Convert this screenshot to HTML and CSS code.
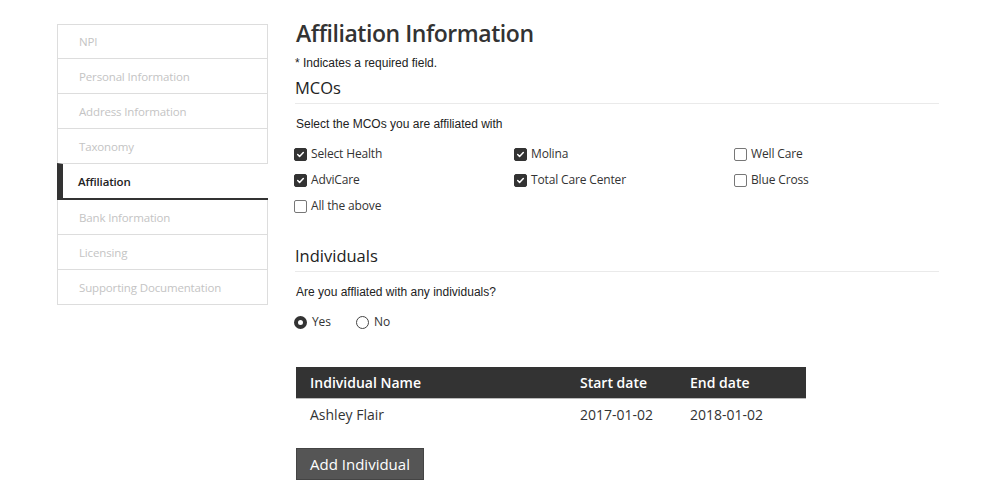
FILE: index.html
```html
<!DOCTYPE html>
<html>
<head>
<meta charset="utf-8">
<link rel="stylesheet" href="styles.css">
</head>
<body>
<div class="page">
  <nav class="steps">
    <div class="step">NPI</div>
    <div class="step">Personal Information</div>
    <div class="step">Address Information</div>
    <div class="step">Taxonomy</div>
    <div class="step active">Affiliation</div>
    <div class="step">Bank Information</div>
    <div class="step">Licensing</div>
    <div class="step">Supporting Documentation</div>
  </nav>
  <main class="content">
    <h1 class="title">Affiliation Information</h1>
    <p class="note">* Indicates a required field.</p>
    <h2 class="section">MCOs</h2>
    <p class="question">Select the MCOs you are affiliated with</p>
    <div class="checks">
      <label class="check"><span class="box on"><svg viewBox="0 0 13 13" width="13" height="13"><path d="M3.2 6.6 5.4 8.8 9.8 4.2" fill="none" stroke="#fff" stroke-width="1.8" stroke-linecap="round" stroke-linejoin="round"/></svg></span>Select Health</label>
      <label class="check"><span class="box on"><svg viewBox="0 0 13 13" width="13" height="13"><path d="M3.2 6.6 5.4 8.8 9.8 4.2" fill="none" stroke="#fff" stroke-width="1.8" stroke-linecap="round" stroke-linejoin="round"/></svg></span>Molina</label>
      <label class="check"><span class="box"></span>Well Care</label>
      <label class="check"><span class="box on"><svg viewBox="0 0 13 13" width="13" height="13"><path d="M3.2 6.6 5.4 8.8 9.8 4.2" fill="none" stroke="#fff" stroke-width="1.8" stroke-linecap="round" stroke-linejoin="round"/></svg></span>AdviCare</label>
      <label class="check"><span class="box on"><svg viewBox="0 0 13 13" width="13" height="13"><path d="M3.2 6.6 5.4 8.8 9.8 4.2" fill="none" stroke="#fff" stroke-width="1.8" stroke-linecap="round" stroke-linejoin="round"/></svg></span>Total Care Center</label>
      <label class="check"><span class="box"></span>Blue Cross</label>
      <label class="check"><span class="box"></span>All the above</label>
    </div>
    <h2 class="section second">Individuals</h2>
    <p class="question">Are you affliated with any individuals?</p>
    <div class="radios">
      <label class="radio"><span class="dot on"></span>Yes</label>
      <label class="radio"><span class="dot"></span>No</label>
    </div>
    <table class="grid">
      <thead>
        <tr><th class="c-name">Individual Name</th><th class="c-start">Start date</th><th class="c-end">End date</th></tr>
      </thead>
      <tbody>
        <tr><td>Ashley Flair</td><td>2017-01-02</td><td>2018-01-02</td></tr>
      </tbody>
    </table>
    <button class="add">Add Individual</button>
  </main>
</div>
</body>
</html>
```
FILE: styles.css
```css
* { box-sizing: border-box; }
html, body { margin: 0; padding: 0; background: #fff; }
body { font-family: "Open Sans", "Noto Sans", sans-serif; color: #333; }

.page {
  display: flex;
  align-items: flex-start;
  padding: 17px 0 0 57px;
  gap: 27px;
}

.steps {
  width: 211px;
  margin-top: 7px;
  display: flex;
  flex-direction: column;
}
.step {
  height: 35px;
  display: flex;
  align-items: center;
  padding-left: 21px;
  font-size: 11.5px;
  color: #c4c4c4;
  border: 1px solid #ddd;
  border-top: none;
  letter-spacing: -0.15px;
}
.step:first-child { border-top: 1px solid #ddd; }
.step.active {
  color: #222;
  font-weight: 600;
  border-left: 6px solid #333;
  border-right: none;
  border-bottom: 2px solid #333;
  border-top: 1px solid #ddd;
  padding-left: 15px;
  margin-top: -1px;
  height: 37px;
}

.content {
  width: 644px;
  display: flex;
  flex-direction: column;
  align-items: flex-start;
}

.title {
  margin: 0 0 0 1px;
  font-size: 23px;
  font-weight: 600;
  color: #333;
  line-height: 32px;
  letter-spacing: -0.45px;
}
.note {
  margin: 7px 0 0;
  font-family: "Liberation Sans", Arial, sans-serif;
  font-size: 12px;
  color: #222;
  line-height: 14px;
}
.section {
  align-self: stretch;
  margin: 7px 0 0;
  padding-bottom: 4px;
  font-size: 16.5px;
  font-weight: 400;
  color: #222;
  line-height: 22px;
  border-bottom: 1px solid #eaeaea;
}
.section.second { margin-top: 31px; }
.question {
  margin: 13px 0 0 1px;
  font-family: "Liberation Sans", Arial, sans-serif;
  font-size: 12px;
  color: #222;
  line-height: 14px;
}

.checks {
  margin-top: 15px;
  display: grid;
  grid-template-columns: 220px 220px 200px;
  row-gap: 10px;
  margin-left: -1px;
}
.check, .radio {
  display: flex;
  align-items: center;
  font-size: 12px;
  color: #333;
  line-height: 16px;
  letter-spacing: -0.15px;
}
.box {
  width: 13px;
  height: 13px;
  border: 1px solid #777;
  border-radius: 2px;
  margin-right: 4px;
  display: flex;
  align-items: center;
  justify-content: center;
}
.box.on { background: #333; border-color: #333; }
.box svg { display: block; }

.radios {
  margin-top: 15px;
  display: flex;
  gap: 16px;
  margin-left: -1px;
}
.dot {
  width: 13px;
  height: 13px;
  border: 1px solid #444;
  border-radius: 50%;
  margin-right: 5px;
}
.dot.on {
  border: 4px solid #333;
  background: #fff;
}
.radio:first-child { width: 46px; }

.grid {
  margin-top: 37px;
  margin-left: 1px;
  width: 510px;
  border-collapse: collapse;
  font-size: 14px;
}
.grid th {
  background: #333;
  color: #fff;
  font-weight: 600;
  text-align: left;
  height: 31px;
  padding: 0 0 0 14px;
  border-bottom: 1px solid #bbb;
}
.grid td {
  height: 32px;
  padding: 0 0 0 14px;
  color: #333;
}
.grid .c-name { width: 270px; }
.grid .c-start { width: 110px; }

.add {
  margin-top: 18px;
  margin-left: 1px;
  width: 128px;
  height: 32px;
  background: #555;
  color: #fff;
  border: 1px solid #444;
  font-family: "Open Sans", "Noto Sans", sans-serif;
  font-size: 15px;
  padding: 0;
}
```
